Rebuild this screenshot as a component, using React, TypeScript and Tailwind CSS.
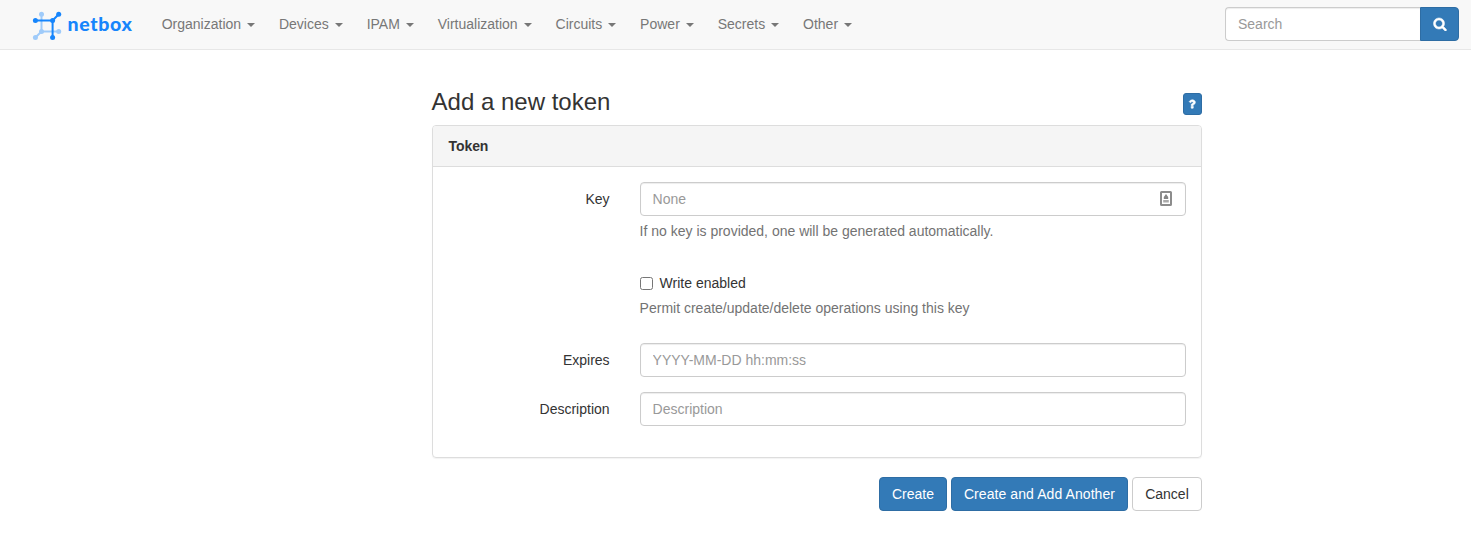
import React from "react";

const menus = ["Organization", "Devices", "IPAM", "Virtualization", "Circuits", "Power", "Secrets", "Other"];

const inputClass =
  "block h-[34px] w-full rounded-[4px] border border-[#ccc] bg-white px-3 text-sm text-[#555] shadow-[inset_0_1px_1px_rgba(0,0,0,0.075)] outline-none placeholder:text-[#999] placeholder:opacity-100";

const primaryClass =
  "h-[34px] rounded-[4px] border border-[#2e6da4] bg-[#337ab7] text-sm text-white";

function Logo() {
  return (
    <svg width="102" height="32" viewBox="0 0 102 32" className="block shrink-0" aria-label="netbox">
      <g stroke="#9fcbfa" fill="#9fcbfa" strokeWidth="2">
        <path d="M9.5 4V21.5H26.7M9.5 21.5L3.4 27.5" fill="none" />
        <g stroke="none">
          <circle cx="9.5" cy="4.2" r="2.5" />
          <circle cx="9.5" cy="21.5" r="2.5" />
          <circle cx="26.7" cy="21.5" r="2.5" />
          <circle cx="3.4" cy="27.5" r="2.5" />
        </g>
      </g>
      <g stroke="#1685fc" fill="#1685fc" strokeWidth="2">
        <path d="M3.4 10.5H20.6V27.5M20.6 10.5L26.7 4.2" fill="none" />
        <g stroke="none">
          <circle cx="3.4" cy="10.5" r="2.5" />
          <circle cx="20.6" cy="10.5" r="2.5" />
          <circle cx="26.7" cy="4.2" r="2.5" />
          <circle cx="20.6" cy="27.5" r="2.5" />
        </g>
      </g>
      <text x="35.4" y="20.8" textLength="64.5" fill="#1685fc" className="font-['Lato',sans-serif] text-[19.5px] font-black">
        netbox
      </text>
    </svg>
  );
}

function Row({ label, children }: { label: string; children: React.ReactNode }) {
  return (
    <div className="flex">
      <label className="w-[177px] shrink-0 pt-[7px] text-right">{label}</label>
      <div className="ml-[30px] w-[546px]">{children}</div>
    </div>
  );
}

export default function App() {
  return (
    <div className="min-h-[551px] bg-white font-['Liberation_Sans',Arial,sans-serif] text-sm leading-5 text-[#333]">
      <nav className="flex h-[50px] items-center border-b border-[#e7e7e7] bg-[#f8f8f8] pr-3 pl-8">
        <div className="pt-[3px]">
          <Logo />
        </div>
        <ul className="ml-[15.7px] flex pb-px">
          {menus.map((name) => (
            <li key={name} className="flex items-center px-3 text-[#777]">
              <span>{name}</span>
              <span className="mt-px ml-[5.9px] h-0 w-0 border-x-4 border-t-4 border-x-transparent border-t-[#777]" />
            </li>
          ))}
        </ul>
        <form className="ml-auto flex pb-px">
          <input
            placeholder="Search"
            className="h-[34px] w-[195px] rounded-l-[4px] border border-r-0 border-[#ccc] bg-white px-3 text-sm shadow-[inset_0_1px_1px_rgba(0,0,0,0.075)] outline-none placeholder:text-[#999] placeholder:opacity-100"
          />
          <button
            type="button"
            aria-label="Search"
            className="flex h-[34px] w-[39px] items-center justify-center rounded-r-[4px] border border-[#2e6da4] bg-[#337ab7] text-white"
          >
            <svg
              width="14"
              height="14"
              viewBox="0 0 1792 1792"
              fill="currentColor"
              stroke="currentColor"
              strokeWidth="70"
            >
              <path d="M1216 832q0-185-131.5-316.5t-316.5-131.5-316.5 131.5-131.5 316.5 131.5 316.5 316.5 131.5 316.5-131.5 131.5-316.5zm512 832q0 52-38 90t-90 38q-54 0-90-38l-343-342q-179 124-399 124-143 0-273.5-55.5t-225-150-150-225-55.5-273.5 55.5-273.5 150-225 225-150 273.5-55.5 273.5 55.5 225 150 150 225 55.5 273.5q0 220-124 399l343 343q37 37 37 90z" />
            </svg>
          </button>
        </form>
      </nav>

      <main className="ml-[431.6px] w-[770.4px] pt-[38px]">
        <div className="flex h-[37px] items-start justify-between">
          <h3 className="text-[24px] leading-[28px]">Add a new token</h3>
          <button
            type="button"
            aria-label="Help"
            className="mt-[5px] flex h-[22px] w-[19px] items-center justify-center rounded-[3px] border border-[#2e6da4] bg-[#337ab7] text-white"
          >
            <svg
              width="12"
              height="12"
              viewBox="0 0 1792 1792"
              fill="currentColor"
              stroke="currentColor"
              strokeWidth="80"
              className="mr-px shrink-0"
            >
              <path d="M1088 1256v240q0 16-12 28t-28 12h-240q-16 0-28-12t-12-28v-240q0-16 12-28t28-12h240q16 0 28 12t12 28zm316-600q0 54-15.5 101t-35 76.5-55 59.5-57.5 43.5-61 35.5q-41 23-68.5 65t-27.5 67q0 17-12 32.5t-28 15.5h-240q-15 0-25.5-18.5t-10.5-37.5v-45q0-83 65-156.5t143-108.5q59-27 84-56t25-76q0-42-46.5-74t-107.5-32q-65 0-108 29-35 25-107 115-13 16-31 16-12 0-25-8l-164-125q-13-10-15.5-25t5.5-28q160-266 464-266 80 0 161 31t146 83 106 127.5 41 158.5z" />
            </svg>
          </button>
        </div>

        <section className="h-[333px] rounded-[4px] border border-[#ddd] shadow-[0_1px_1px_rgba(0,0,0,0.05)]">
          <div className="h-[41px] rounded-t-[3px] border-b border-[#ddd] bg-[#f5f5f5] px-[16px] py-[10px] font-bold tracking-[-0.1px]">
            Token
          </div>
          <div className="pt-[15px]">
            <Row label="Key">
              <div className="relative">
                <input placeholder="None" className={inputClass} />
                <svg width="12" height="15" viewBox="0 0 12 15" className="absolute top-[9px] right-[14px]">
                  <rect x="1" y="1" width="10" height="13" rx="0.5" fill="#fff" stroke="#8c8c8c" strokeWidth="2" />
                  <path d="M6 3L8.2 6V8H3.8V6Z" fill="#858585" />
                  <path d="M3.2 9H8.8V11.5H3.2Z" fill="#aaa" />
                </svg>
              </div>
              <p className="mt-[5px] text-[#737373]">If no key is provided, one will be generated automatically.</p>
            </Row>
            <div className="mt-8 ml-[207px]">
              <label className="flex items-center">
                <input
                  type="checkbox"
                  className="mr-[7px] h-[13px] w-[13px] appearance-none rounded-[2.5px] border border-[#767676] bg-white"
                />
                Write enabled
              </label>
              <p className="mt-[5px] text-[#737373]">Permit create/update/delete operations using this key</p>
            </div>
            <div className="mt-[25px] flex flex-col gap-[15px]">
              <Row label="Expires">
                <input placeholder="YYYY-MM-DD hh:mm:ss" className={inputClass} />
              </Row>
              <Row label="Description">
                <input placeholder="Description" className={inputClass} />
              </Row>
            </div>
          </div>
        </section>

        <div className="mt-[19px] flex justify-end gap-1">
          <button type="button" className={`${primaryClass} w-[68px]`}>Create</button>
          <button type="button" className={`${primaryClass} w-[177px]`}>
            <span className="tracking-[0.08px]">Create and Add Another</span>
          </button>
          <button type="button" className="h-[34px] w-[70px] rounded-[4px] border border-[#ccc] bg-white text-sm text-[#333]">
            Cancel
          </button>
        </div>
      </main>
    </div>
  );
}
